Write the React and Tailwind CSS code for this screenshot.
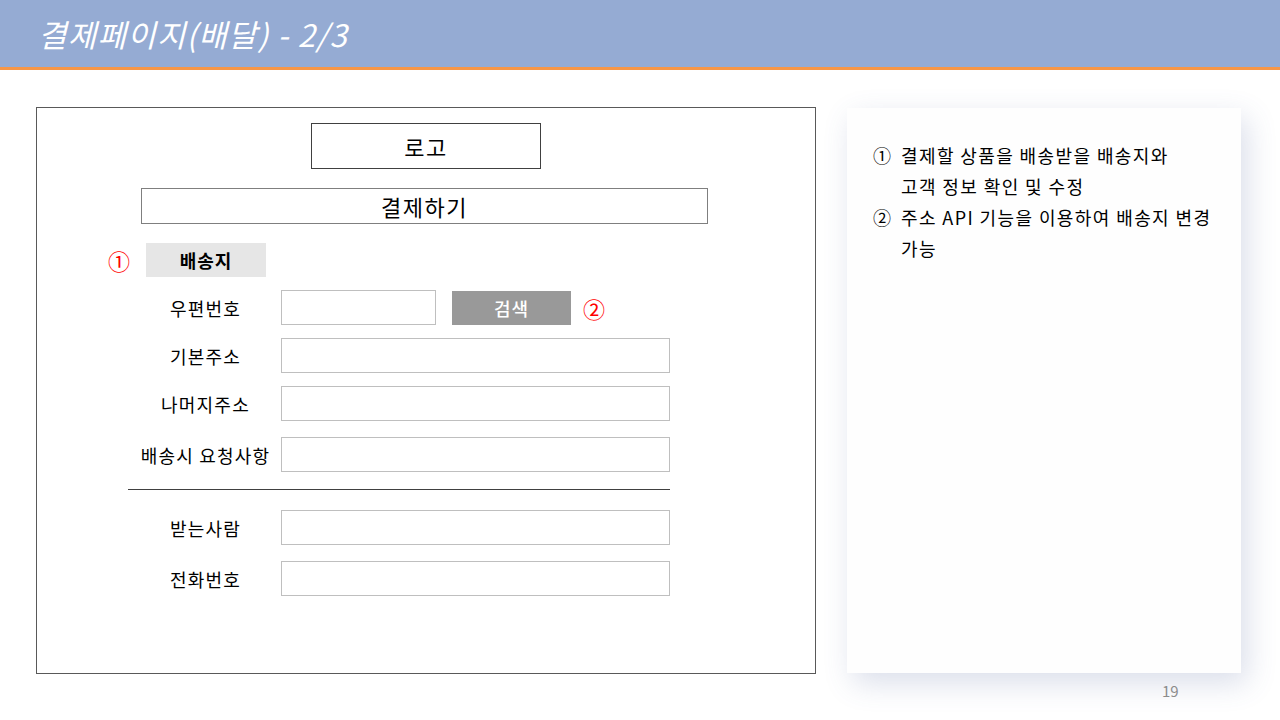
import React from "react";

const font = { fontFamily: '"Noto Sans CJK KR", "Noto Sans", sans-serif' };

const addressRows = [
  { label: "기본주소", mt: "mt-[13px]" },
  { label: "나머지주소", mt: "mt-[13px]" },
  { label: "배송시 요청사항", mt: "mt-[16px]" },
];

const personRows = [
  { label: "받는사람", mt: "mt-[20px]" },
  { label: "전화번호", mt: "mt-[16px]" },
];

function FieldRow({ label, mt }) {
  return (
    <div className={`flex items-center ${mt}`}>
      <div className="w-[244px] pl-[93px] text-center text-[18px] tracking-[1.2px] leading-none text-black">{label}</div>
      <div className="w-[389px] h-[35px] border border-[#bfbfbf] bg-white"></div>
    </div>
  );
}

export default function App() {
  return (
    <div className="w-[1280px] h-[720px] bg-white overflow-hidden" style={font}>
      {/* Title bar */}
      <header className="h-[70px] bg-[#95abd3] border-b-[3px] border-[#f79646] flex items-center pl-[38px]">
        <h1 className="text-[31px] italic text-white leading-none tracking-[1.2px]">결제페이지(배달) - 2/3</h1>
      </header>

      <div className="flex mt-[37px]">
        {/* Wireframe */}
        <section className="ml-[36px] w-[780px] h-[567px] border border-[#595959] flex flex-col">
          <div className="mt-[15px] self-center w-[230px] h-[46px] border border-[#404040] flex items-center justify-center text-[22px] tracking-[1.5px] leading-none">
            로고
          </div>
          <div className="mt-[19px] ml-[104px] w-[567px] h-[36px] border border-[#7f7f7f] flex items-center justify-center text-[22px] tracking-[1.5px] leading-none">
            결제하기
          </div>

          <div className="mt-[19px] flex items-center">
            <span className="ml-[71px] w-[24px] text-[22px] leading-none text-[#ff0000]">①</span>
            <div className="ml-[14px] w-[120px] h-[34px] bg-[#e6e6e6] flex items-center justify-center text-[18px] font-bold tracking-[1px] leading-none">
              배송지
            </div>
          </div>

          <div className="mt-[13px] flex items-center">
            <div className="w-[244px] pl-[93px] text-center text-[18px] tracking-[1.2px] leading-none">우편번호</div>
            <div className="w-[155px] h-[35px] border border-[#bfbfbf]"></div>
            <div className="ml-[16px] w-[119px] h-[34px] bg-[#999999] flex items-center justify-center text-[18px] font-medium tracking-[1px] text-white leading-none">
              검색
            </div>
            <span className="ml-[12px] text-[22px] leading-none text-[#ff0000]">②</span>
          </div>

          {addressRows.map((r) => (
            <FieldRow key={r.label} {...r} />
          ))}

          <div className="mt-[17px] ml-[91px] w-[542px] h-px bg-[#404040]"></div>

          {personRows.map((r) => (
            <FieldRow key={r.label} {...r} />
          ))}
        </section>

        {/* Description panel */}
        <aside className="ml-[31px] mt-px w-[394px] h-[565px] bg-[#fefefe] shadow-[6px_10px_28px_rgba(70,90,150,0.2)] pt-[32px] pl-[26px] text-[18px] leading-[31px] tracking-[1.4px] text-black">
          <div className="flex">
            <span className="w-[28px] shrink-0">①</span>
            <p>
              결제할 상품을 배송받을 배송지와
              <br />
              고객 정보 확인 및 수정
            </p>
          </div>
          <div className="flex">
            <span className="w-[28px] shrink-0">②</span>
            <p>
              주소 API 기능을 이용하여 배송지 변경
              <br />
              가능
            </p>
          </div>
        </aside>
      </div>

      <div className="mt-[9px] pl-[1162px] text-[15px] text-[#8c8c8c] leading-none">19</div>
    </div>
  );
}
